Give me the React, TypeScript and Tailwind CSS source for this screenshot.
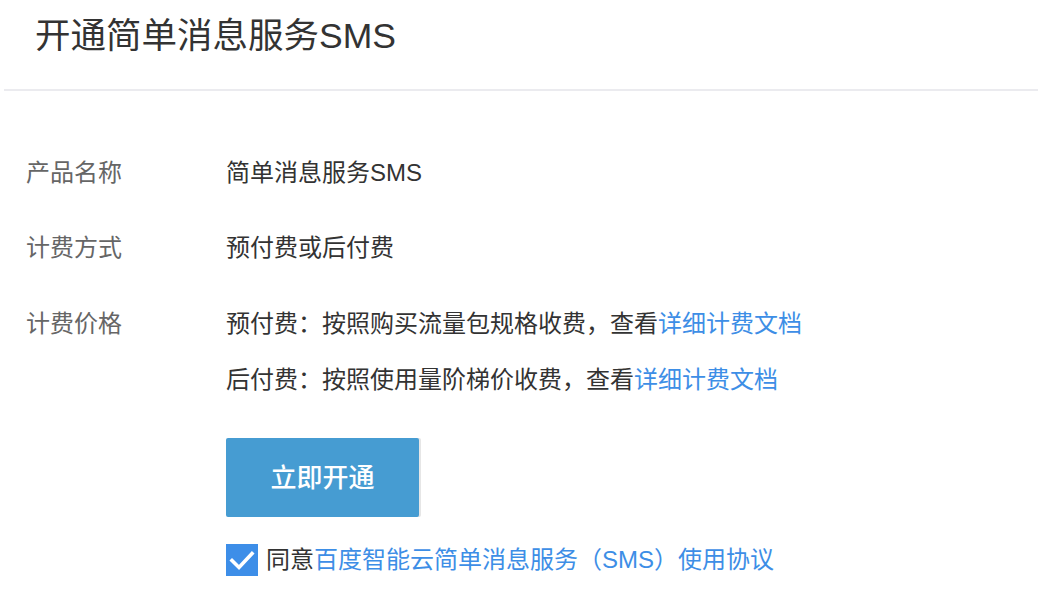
import React, { useState } from 'react';

const font = 'font-["Helvetica_Neue","Liberation_Sans","Noto_Sans_CJK_SC",sans-serif]';

export default function App() {
  const [agreed, setAgreed] = useState(true);

  return (
    <div className={`min-h-screen bg-white ${font}`}>
      {/* header */}
      <div className="ml-1 h-[91px] border-b-2 border-[#ebebef] pl-[31px] pt-[9px]">
        <h1 className="text-[35.5px] leading-[54px] text-[#333]">开通简单消息服务SMS</h1>
      </div>

      <div className="pl-[26px] pt-[64px] text-[24px] leading-[36px]">
        <div className="flex mb-[39px]">
          <div className="w-[200px] shrink-0 text-[#666]">产品名称</div>
          <div className="text-[#333]">简单消息服务SMS</div>
        </div>
        <div className="flex mb-[40px]">
          <div className="w-[200px] shrink-0 text-[#666]">计费方式</div>
          <div className="text-[#333]">预付费或后付费</div>
        </div>
        <div className="flex">
          <div className="w-[200px] shrink-0 text-[#666]">计费价格</div>
          <div className="flex flex-col">
            <div className="flex flex-col gap-[20px] text-[#333]">
              <p>
                预付费：按照购买流量包规格收费，查看<a className="text-[#3d8ee6]" href="#">详细计费文档</a>
              </p>
              <p>
                后付费：按照使用量阶梯价收费，查看<a className="text-[#3d8ee6]" href="#">详细计费文档</a>
              </p>
            </div>
            <button className="mt-[40px] flex h-[79px] w-[193px] items-center justify-center rounded-[2px] bg-[#469cd2] text-[26px] font-medium text-white shadow-[2px_0_0_#e6e6e6]">
              立即开通
            </button>
            <label className="mt-[25px] flex items-center gap-[8px]" onClick={() => setAgreed(!agreed)}>
              <span className="flex h-[32px] w-[32px] items-center justify-center bg-[#3d8ee8]">
                {agreed && (
                  <svg width="26" height="26" viewBox="0 0 26 26" fill="none">
                    <path d="M3 13.5 L10 20.5 L23 6.5" stroke="white" strokeWidth="3.6" strokeLinecap="square" />
                  </svg>
                )}
              </span>
              <span className="text-[#333]">
                同意<a className="text-[#3d8ee6]" href="#">百度智能云简单消息服务（SMS）使用协议</a>
              </span>
            </label>
          </div>
        </div>
      </div>
    </div>
  );
}
